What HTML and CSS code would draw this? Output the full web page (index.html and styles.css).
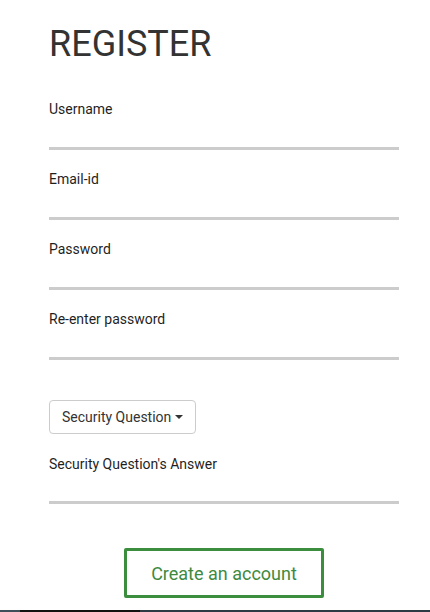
FILE: index.html
```html
<!DOCTYPE html>
<html lang="en">
<head>
<meta charset="utf-8">
<title>Register</title>
<link rel="stylesheet" href="styles.css">
</head>
<body>
<main class="page">
  <form class="register">
    <h1 class="title">REGISTER</h1>
    <div class="field">
      <label class="label" for="u">Username</label>
      <input class="input" id="u" type="text">
    </div>
    <div class="field">
      <label class="label" for="e">Email-id</label>
      <input class="input" id="e" type="email">
    </div>
    <div class="field">
      <label class="label" for="p">Password</label>
      <input class="input" id="p" type="password">
    </div>
    <div class="field">
      <label class="label" for="r">Re-enter password</label>
      <input class="input" id="r" type="password">
    </div>
    <div class="dropdown">
      <button class="dropdown-btn" type="button">Security Question <span class="caret"></span></button>
    </div>
    <div class="field">
      <label class="label" for="a">Security Question's Answer</label>
      <input class="input input-last" id="a" type="text">
    </div>
    <div class="actions">
      <button class="create" type="button">Create an account</button>
    </div>
  </form>
  <div class="strip"></div>
</main>
</body>
</html>
```
FILE: styles.css
```css
* { box-sizing: border-box; }
html, body { margin: 0; padding: 0; background: #fff; }
body {
  font-family: Roboto, "Liberation Sans", sans-serif;
  color: #333;
  overflow: hidden;
}
.page {
  height: 612px;
  display: flex;
  flex-direction: column;
}
.register {
  display: flex;
  flex-direction: column;
  padding: 24px 31px 0 49px;
}
.title {
  margin: 0 0 35px;
  font-size: 36px;
  line-height: 40px;
  font-weight: 400;
  color: #333;
}
.field {
  display: flex;
  flex-direction: column;
  margin-bottom: 19px;
}
.label {
  font-size: 14px;
  line-height: 20px;
  font-weight: 400;
  color: #1f1f1f;
}
.input {
  height: 31px;
  border: none;
  border-bottom: 3px solid #cccccc;
  outline: none;
  padding: 0;
  font: inherit;
  background: transparent;
}
.input-last {
  height: 30px;
}
.dropdown {
  margin: 21px 0 20px;
}
.dropdown-btn {
  height: 34px;
  padding: 6px 12px;
  border: 1px solid #ccc;
  border-radius: 4px;
  background: #fff;
  font-family: Roboto, "Liberation Sans", sans-serif;
  font-size: 14px;
  line-height: 20px;
  color: #333;
  display: inline-flex;
  align-items: center;
}
.caret {
  display: inline-block;
  width: 0;
  height: 0;
  margin-left: 4px;
  border-top: 4px solid #333;
  border-left: 4px solid transparent;
  border-right: 4px solid transparent;
}
.actions {
  display: flex;
  justify-content: center;
  margin-top: 25px;
}
.create {
  width: 200px;
  height: 50px;
  border: 3px solid #3a8e3e;
  border-radius: 2px;
  background: #fff;
  font-family: Roboto, "Liberation Sans", sans-serif;
  font-size: 18px;
  color: #3e8a3f;
  padding: 0;
}
.strip {
  margin-top: auto;
  height: 2px;
  background: linear-gradient(to right, #3f4f59 0, #3f4f59 20px, #111 20px, #111 140px, #2c3a44 140px);
}
```
